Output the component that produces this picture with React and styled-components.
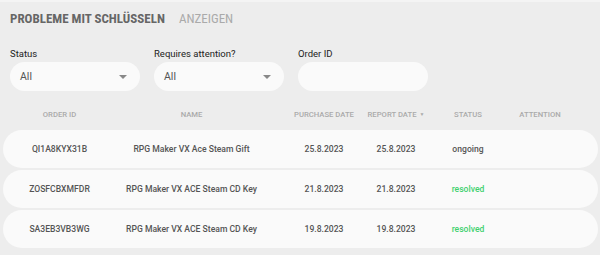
import styled, { createGlobalStyle } from "styled-components";

const GlobalStyle = createGlobalStyle`
  html, body {
    margin: 0;
    padding: 0;
    background: #ededed;
    font-family: Roboto, "Liberation Sans", sans-serif;
  }
`;

const Page = styled.div`
  width: 600px;
  height: 255px;
  box-sizing: border-box;
  border-top: 2px solid #f4f4f4;
  padding: 9px 2px 0 3px;
  overflow: hidden;
`;

const TitleBar = styled.div`
  display: flex;
  align-items: baseline;
  gap: 14px;
  padding-left: 7px;
  height: 22px;
`;

const Title = styled.h1`
  margin: 0;
  font-family: "Roboto Condensed", "Liberation Sans Narrow", "DejaVu Sans Condensed", sans-serif;
  font-size: 13px;
  font-weight: ${(p) => (p.$muted ? 400 : 700)};
  color: ${(p) => (p.$muted ? "#aaaaaa" : "#666666")};
`;

const Filters = styled.div`
  display: flex;
  gap: 14px;
  padding: 15px 0 0 7px;
`;

const Field = styled.label`
  display: flex;
  flex-direction: column;
  gap: 2px;
  width: 130px;
`;

const FieldLabel = styled.span`
  font-size: 9.5px;
  color: #222;
  line-height: 12px;
`;

const Select = styled.div`
  height: 29px;
  border-radius: 15px;
  background: #fafafa;
  display: flex;
  align-items: center;
  justify-content: space-between;
  padding: 0 13px 0 10px;
  font-size: 10.5px;
  color: #555;
`;

const Caret = styled.span`
  width: 0;
  height: 0;
  border-left: 4px solid transparent;
  border-right: 4px solid transparent;
  border-top: 4px solid #888;
`;

const Input = styled.input`
  height: 29px;
  box-sizing: border-box;
  border: none;
  outline: none;
  border-radius: 15px;
  background: #fafafa;
  padding: 0 10px;
`;

const Table = styled.div`
  margin-top: 9px;
  display: flex;
  flex-direction: column;
  gap: 2px;
`;

const Columns = "71px 193px 72px 72px 72px 72px";

const HeaderRow = styled.div`
  display: grid;
  grid-template-columns: ${Columns};
  padding: 0 21px;
  height: 28px;
  align-items: center;
`;

const HeadCell = styled.div`
  text-align: center;
  font-size: 7.7px;
  font-weight: 500;
  color: #aaa;
  white-space: nowrap;
`;

const SortMark = styled.span`
  font-size: 5px;
  margin-left: 3px;
  vertical-align: 1px;
`;

const Row = styled.div`
  display: grid;
  grid-template-columns: ${Columns};
  padding: 0 21px;
  height: 38px;
  align-items: center;
  background: #fafafa;
  border-radius: 19px;
`;

const Cell = styled.div`
  text-align: center;
  font-size: 8.6px;
  font-weight: 500;
  color: ${(p) => (p.$status === "resolved" ? "#3fd16f" : "#555")};
  white-space: nowrap;
`;

const orders = [
  { id: "QI1A8KYX31B", name: "RPG Maker VX Ace Steam Gift", purchase: "25.8.2023", report: "25.8.2023", status: "ongoing" },
  { id: "ZOSFCBXMFDR", name: "RPG Maker VX ACE Steam CD Key", purchase: "21.8.2023", report: "21.8.2023", status: "resolved" },
  { id: "SA3EB3VB3WG", name: "RPG Maker VX ACE Steam CD Key", purchase: "19.8.2023", report: "19.8.2023", status: "resolved" },
];

export default function App() {
  return (
    <Page>
      <GlobalStyle />
      <TitleBar>
        <Title>PROBLEME MIT SCHLÜSSELN</Title>
        <Title $muted>ANZEIGEN</Title>
      </TitleBar>

      <Filters>
        <Field>
          <FieldLabel>Status</FieldLabel>
          <Select>All<Caret /></Select>
        </Field>
        <Field>
          <FieldLabel>Requires attention?</FieldLabel>
          <Select>All<Caret /></Select>
        </Field>
        <Field>
          <FieldLabel>Order ID</FieldLabel>
          <Input />
        </Field>
      </Filters>

      <Table>
        <HeaderRow>
          <HeadCell>ORDER ID</HeadCell>
          <HeadCell>NAME</HeadCell>
          <HeadCell>PURCHASE DATE</HeadCell>
          <HeadCell>REPORT DATE<SortMark>▼</SortMark></HeadCell>
          <HeadCell>STATUS</HeadCell>
          <HeadCell>ATTENTION</HeadCell>
        </HeaderRow>
        {orders.map((o) => (
          <Row key={o.id}>
            <Cell>{o.id}</Cell>
            <Cell>{o.name}</Cell>
            <Cell>{o.purchase}</Cell>
            <Cell>{o.report}</Cell>
            <Cell $status={o.status}>{o.status}</Cell>
            <Cell></Cell>
          </Row>
        ))}
      </Table>
    </Page>
  );
}
